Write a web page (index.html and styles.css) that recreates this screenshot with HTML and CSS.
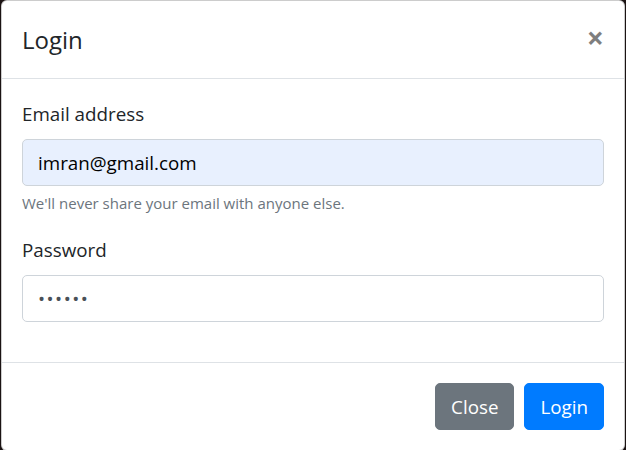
FILE: index.html
```html
<!DOCTYPE html>
<html lang="en">
<head>
<meta charset="utf-8">
<title>Login</title>
<link rel="stylesheet" href="styles.css">
</head>
<body>
<div class="modal">
  <div class="modal-header">
    <h5 class="modal-title">Login</h5>
    <button class="close" type="button" aria-label="Close">×</button>
  </div>
  <div class="modal-body">
    <div class="form-group">
      <label class="label" for="email">Email address</label>
      <input class="form-control autofill" id="email" type="email" value="imran@gmail.com">
      <small class="form-text">We'll never share your email with anyone else.</small>
    </div>
    <div class="form-group">
      <label class="label" for="pw">Password</label>
      <input class="form-control password" id="pw" type="password" value="secret">
    </div>
  </div>
  <div class="modal-footer">
    <button class="btn btn-secondary" type="button">Close</button>
    <button class="btn btn-primary" type="button">Login</button>
  </div>
</div>
</body>
</html>
```

FILE: styles.css
```css
* { box-sizing: border-box; }
html, body { margin: 0; padding: 0; }
body {
  background: #1b1313;
  font-family: "Segoe UI", "Open Sans", "Noto Sans", sans-serif;
  color: #212529;
  font-size: 18.8px;
  line-height: 30px;
  overflow: hidden;
  height: 450px;
}
.modal {
  margin-left: 1px;
  width: 624px;
  background: #fff;
  border: 1px solid rgba(0,0,0,.2);
  border-radius: 6px;
}
.modal-header {
  display: flex;
  align-items: flex-start;
  justify-content: space-between;
  padding: 20px 20px 19.5px;
  border-bottom: 1px solid #dee2e6;
}
.modal-title {
  margin: 0;
  font-size: 24px;
  font-weight: 500;
  line-height: 37.5px;
}
.close {
  padding: 22px 20px 18px;
  margin: -20px -20px -20px auto;
  background: transparent;
  border: 0;
  font-family: inherit;
  font-size: 30px;
  font-weight: 700;
  line-height: 1;
  color: #000;
  opacity: .5;
}
.modal-body { padding: 20px; }
.form-group { margin-bottom: 20px; display: flex; flex-direction: column; }
.label { margin-bottom: 10px; }
.form-control {
  display: block;
  width: 100%;
  height: 47px;
  padding: 7.5px 15px;
  font-family: inherit;
  font-size: 18.8px;
  line-height: 30px;
  color: #495057;
  background: #fff;
  border: 1px solid #ced4da;
  border-radius: 5px;
}
.autofill { background: #e8f0fe; color: #000; }
.password { letter-spacing: 1.5px; }
.form-text {
  margin-top: 5px;
  font-size: 15px;
  line-height: 24px;
  color: #6c757d;
}
.modal-footer {
  display: flex;
  justify-content: flex-end;
  align-items: center;
  padding: 15px;
  border-top: 1px solid #dee2e6;
}
.btn {
  margin: 5px;
  padding: 7.5px 15px;
  font-family: inherit;
  font-size: 18.8px;
  line-height: 30px;
  border: 1px solid transparent;
  border-radius: 5px;
  color: #fff;
}
.btn-secondary { background: #6c757d; border-color: #6c757d; }
.btn-primary { background: #007bff; border-color: #007bff; }
```
